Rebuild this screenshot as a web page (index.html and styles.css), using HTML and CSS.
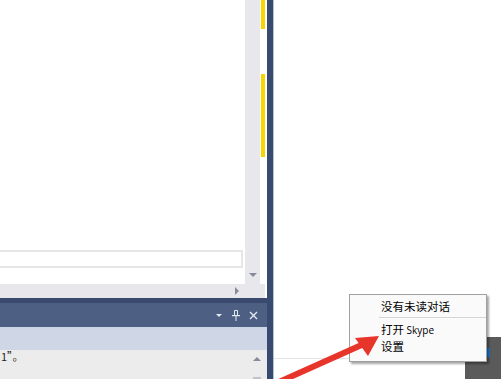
FILE: index.html
```html
<!DOCTYPE html>
<html lang="zh-CN">
<head>
<meta charset="utf-8">
<title>Skype tray menu</title>
<link rel="stylesheet" href="styles.css">
</head>
<body>
<div class="screen">
  <div class="left">
    <div class="editor">
      <div class="code"><div class="field"></div></div>
      <div class="vscroll"><span class="tri-down"></span></div>
      <div class="markers"><div class="mk mk1"></div><div class="mk mk2"></div></div>
    </div>
    <div class="hscroll"><span class="tri-right"></span></div>
    <div class="panel-edge"></div>
    <div class="titlebar">
      <span class="tb-drop"></span>
      <svg class="tb-pin" width="8" height="11" viewBox="0 0 8 11"><path d="M2.5 0.5h3v5h-3z" fill="none" stroke="#e4e9f2" stroke-width="1"/><rect x="0" y="5" width="8" height="1.2" fill="#e4e9f2"/><rect x="3.5" y="6" width="1" height="5" fill="#e4e9f2"/></svg>
      <svg class="tb-close" width="9" height="9" viewBox="0 0 9 9"><path d="M1 1L8 8M8 1L1 8" stroke="#e4e9f2" stroke-width="1.4"/></svg>
    </div>
    <div class="toolbar"></div>
    <div class="output">
      <div class="out-text">1”。</div>
      <div class="out-scroll"><span class="tri-up"></span><span class="thumb"></span></div>
    </div>
  </div>
  <div class="divider"></div>
  <div class="right">
    <div class="desk-line"></div>
  </div>

  <div class="taskbar"><span class="tb-blue"></span></div>

  <div class="menu">
    <div class="item first">没有未读对话</div>
    <div class="sep"></div>
    <div class="item">打开 <span class="latin">Skype</span></div>
    <div class="item">设置</div>
  </div>

  <svg class="arrow" width="501" height="379" viewBox="0 0 501 379">
    <line x1="279" y1="382" x2="366" y2="343" stroke="#e8352b" stroke-width="6"/>
    <polygon points="355,338 379,336 368,356" fill="#e8352b"/>
  </svg>
</div>
</body>
</html>
```
FILE: styles.css
```css
html, body {
  margin: 0;
  padding: 0;
}
body {
  width: 501px;
  height: 379px;
  overflow: hidden;
  background: #ffffff;
  font-family: "Noto Sans CJK SC", "Noto Sans", sans-serif;
}
.screen {
  position: relative;
  width: 501px;
  height: 379px;
  display: flex;
  overflow: hidden;
}
.left {
  width: 267px;
  display: flex;
  flex-direction: column;
  flex: none;
}
.editor {
  height: 284px;
  display: flex;
}
.code {
  width: 245px;
  background: #ffffff;
  display: flex;
  flex-direction: column;
  justify-content: flex-end;
  padding-bottom: 16px;
  box-sizing: border-box;
}
.field {
  height: 18px;
  margin-left: -2px;
  margin-right: 2px;
  border: 2px solid #e6e6e9;
  box-sizing: border-box;
  background: #ffffff;
}
.vscroll {
  width: 15px;
  background: #e8e8ec;
  display: flex;
  flex-direction: column;
  justify-content: flex-end;
  align-items: center;
  padding-bottom: 7px;
  box-sizing: border-box;
}
.tri-down {
  width: 0;
  height: 0;
  border-left: 4px solid transparent;
  border-right: 4px solid transparent;
  border-top: 4px solid #868999;
}
.markers {
  width: 7px;
  background: #ffffff;
}
.mk {
  margin-left: 1px;
  width: 4px;
  background: #f7d500;
}
.mk1 {
  height: 29px;
}
.mk2 {
  margin-top: 45px;
  height: 83px;
}
.hscroll {
  height: 14px;
  background: #e8e8ec;
  border-right: 2px solid #ffffff;
  display: flex;
  align-items: center;
  padding-left: 235px;
  box-sizing: border-box;
}
.tri-right {
  width: 0;
  height: 0;
  border-top: 4px solid transparent;
  border-bottom: 4px solid transparent;
  border-left: 4px solid #868999;
}
.panel-edge {
  height: 5px;
  background: #3a4a6f;
}
.titlebar {
  height: 24px;
  background: #4d5f82;
  display: flex;
  align-items: center;
  justify-content: flex-end;
  padding-right: 9px;
  box-sizing: border-box;
}
.tb-drop {
  width: 0;
  height: 0;
  border-left: 3px solid transparent;
  border-right: 3px solid transparent;
  border-top: 3px solid #e4e9f2;
  margin-right: 10px;
}
.tb-pin {
  margin-right: 9px;
}
.toolbar {
  height: 23px;
  background: #cfd7e7;
}
.output {
  flex: 1;
  background: #ececec;
  display: flex;
}
.out-text {
  flex: 1;
  font-size: 11px;
  line-height: 12px;
  color: #1e1e1e;
  padding-left: 1px;
  white-space: nowrap;
}
.out-scroll {
  width: 17px;
  display: flex;
  flex-direction: column;
  align-items: center;
  padding-top: 7px;
  box-sizing: border-box;
  margin-right: 2px;
}
.tri-up {
  width: 0;
  height: 0;
  border-left: 4px solid transparent;
  border-right: 4px solid transparent;
  border-bottom: 4px solid #868999;
}
.thumb {
  margin-top: auto;
  width: 8px;
  height: 2px;
  background: #c2c3c9;
}
.divider {
  width: 6px;
  flex: none;
  background: #394a70;
  border-right: 1px solid #b7c1d6;
}
.right {
  flex: 1;
  background: #ffffff;
  display: flex;
  flex-direction: column;
  justify-content: flex-end;
}
.desk-line {
  height: 1px;
  background: #e4e4e4;
  margin-bottom: 20px;
}
.taskbar {
  position: absolute;
  left: 465px;
  top: 337px;
  width: 36px;
  height: 42px;
  background: #5a5a5a;
}
.tb-blue {
  position: absolute;
  left: 22px;
  top: 11px;
  width: 3px;
  height: 9px;
  background: #1f78c8;
}
.menu {
  position: absolute;
  left: 349px;
  top: 294px;
  width: 138px;
  height: 68px;
  box-sizing: border-box;
  background: #fafafa;
  border: 1px solid #a0a0a0;
  box-shadow: 2px 2px 2px rgba(0, 0, 0, 0.35);
  padding-top: 2px;
}
.item {
  height: 17px;
  line-height: 17px;
  padding-left: 31px;
  font-size: 11.5px;
  color: #000000;
  white-space: nowrap;
}
.item.first {
  height: 18px;
  line-height: 18px;
}
.latin {
  font-family: "Open Sans", "Liberation Sans", sans-serif;
  font-size: 10px;
}
.sep {
  height: 1px;
  margin: 2px 0 3px 29px;
  background: #d5d5d5;
}
.arrow {
  position: absolute;
  left: 0;
  top: 0;
  pointer-events: none;
}
```
